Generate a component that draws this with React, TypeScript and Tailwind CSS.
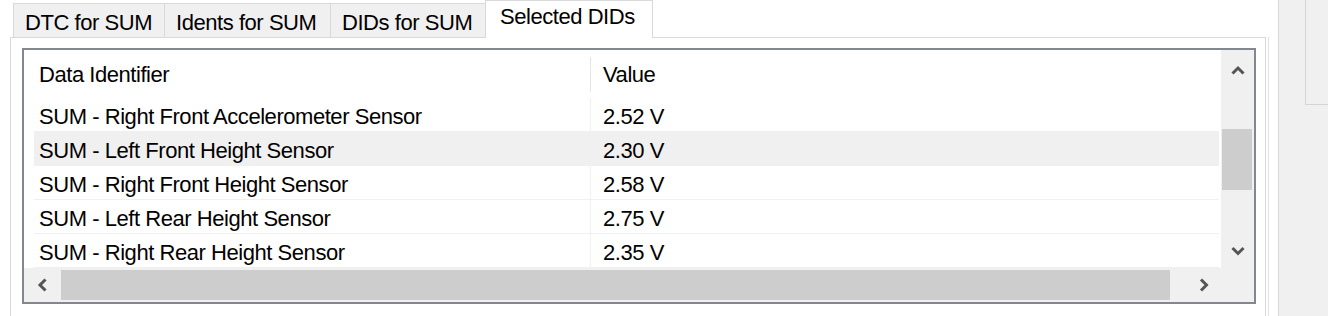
import React from "react";

const tabs = [
  { label: "DTC for SUM", w: "w-[152px]", selected: false },
  { label: "Idents for SUM", w: "w-[167px]", selected: false },
  { label: "DIDs for SUM", w: "w-[156px]", selected: false },
  { label: "Selected DIDs", w: "w-[168px]", selected: true },
];

const rows = [
  { name: "SUM - Right Front Accelerometer Sensor", value: "2.52 V" },
  { name: "SUM - Left Front Height Sensor", value: "2.30 V", hot: true },
  { name: "SUM - Right Front Height Sensor", value: "2.58 V" },
  { name: "SUM - Left Rear Height Sensor", value: "2.75 V" },
  { name: "SUM - Right Rear Height Sensor", value: "2.35 V" },
];

function Chevron({ dir }: { dir: "up" | "down" | "left" | "right" }) {
  const pts = {
    up: "1.5,10.5 7,5 12.5,10.5",
    down: "1.5,4 7,9.5 12.5,4",
    left: "9.5,1.5 4,7 9.5,12.5",
    right: "4,1.5 9.5,7 4,12.5",
  }[dir];
  return (
    <svg width="14" height="14" viewBox="0 0 14 14">
      <polyline points={pts} fill="none" stroke="#555555" strokeWidth="3" />
    </svg>
  );
}

export default function App() {
  return (
    <div className="flex h-[316px] w-[1328px] overflow-hidden bg-white font-['Liberation_Sans',Arial,sans-serif] text-[22px] leading-[24px] tracking-[-0.45px] text-black">
      {/* left side: tab control */}
      <div className="flex w-[1278px] flex-col pl-[10px]">
        <div className="relative z-10 -mb-px flex h-[38px] items-end pl-[3px]">
          {tabs.map((t) =>
            t.selected ? (
              <div
                key={t.label}
                className={`-ml-px h-[38px] whitespace-nowrap border border-b-0 border-[#d9d9d9] bg-white pl-[14px] pt-[4px] ${t.w}`}
              >
                {t.label}
              </div>
            ) : (
              <div
                key={t.label}
                className={`-ml-px h-[35px] whitespace-nowrap border border-[#d9d9d9] bg-[#f0f0f0] pl-[11px] pt-[7px] first:ml-0 ${t.w}`}
              >
                {t.label}
              </div>
            )
          )}
        </div>

        <div className="flex flex-1">
          <div className="w-[1256px] border-l border-r border-t border-[#d9d9d9] bg-white pl-[11px] pt-[10px]">
            {/* list view */}
            <div className="flex h-[256px] w-[1234px] flex-col border-2 border-[#828790]">
              <div className="flex h-[218px]">
                <div className="flex-1 bg-white">
                  <div className="flex h-[48px]">
                    <div className="w-[566px] pl-[15px] pt-[13px]">Data Identifier</div>
                    <div className="mt-[7px] h-[35px] w-px bg-[#e5e5e5]" />
                    <div className="pl-[12px] pt-[13px]">Value</div>
                  </div>
                  {rows.map((r) => (
                    <div
                      key={r.name}
                      className={
                        r.hot
                          ? "ml-[10px] mr-[2px] flex h-[34px] bg-[#f0f0f0]"
                          : "ml-[10px] mr-[2px] flex h-[34px] border-b border-[#f0f0f0]"
                      }
                    >
                      <div className="h-full w-[557px] border-r border-[#f0f0f0] pl-[5px] pt-[7px]">
                        {r.name}
                      </div>
                      <div className="pl-[12px] pt-[7px]">{r.value}</div>
                    </div>
                  ))}
                </div>
                {/* vertical scrollbar */}
                <div className="flex w-[33px] flex-col bg-[#f0f0f0]">
                  <div className="flex h-[40px] items-center justify-center">
                    <Chevron dir="up" />
                  </div>
                  <div className="flex-1 px-[1px] pt-[39px]">
                    <div className="h-[61px] w-[30px] bg-[#cdcdcd]" />
                  </div>
                  <div className="flex h-[34px] items-center justify-center">
                    <Chevron dir="down" />
                  </div>
                </div>
              </div>
              {/* horizontal scrollbar */}
              <div className="flex h-[34px] bg-[#f0f0f0]">
                <div className="flex w-[37px] items-center justify-center">
                  <Chevron dir="left" />
                </div>
                <div className="flex-1 py-[2px]">
                  <div className="h-full w-[1109px] bg-[#cdcdcd]" />
                </div>
                <div className="flex w-[34px] items-center justify-center">
                  <Chevron dir="right" />
                </div>
                <div className="w-[33px]" />
              </div>
            </div>
          </div>
          <div className="ml-[2px] w-px bg-[#e3e3e3]" />
        </div>
      </div>

      {/* right side panel */}
      <div className="flex-1 border-l border-[#dadada] bg-[#f0f0f0] pl-[26px]">
        <div className="h-[105px] border-b border-l border-[#d5d5d5]" />
      </div>
    </div>
  );
}
